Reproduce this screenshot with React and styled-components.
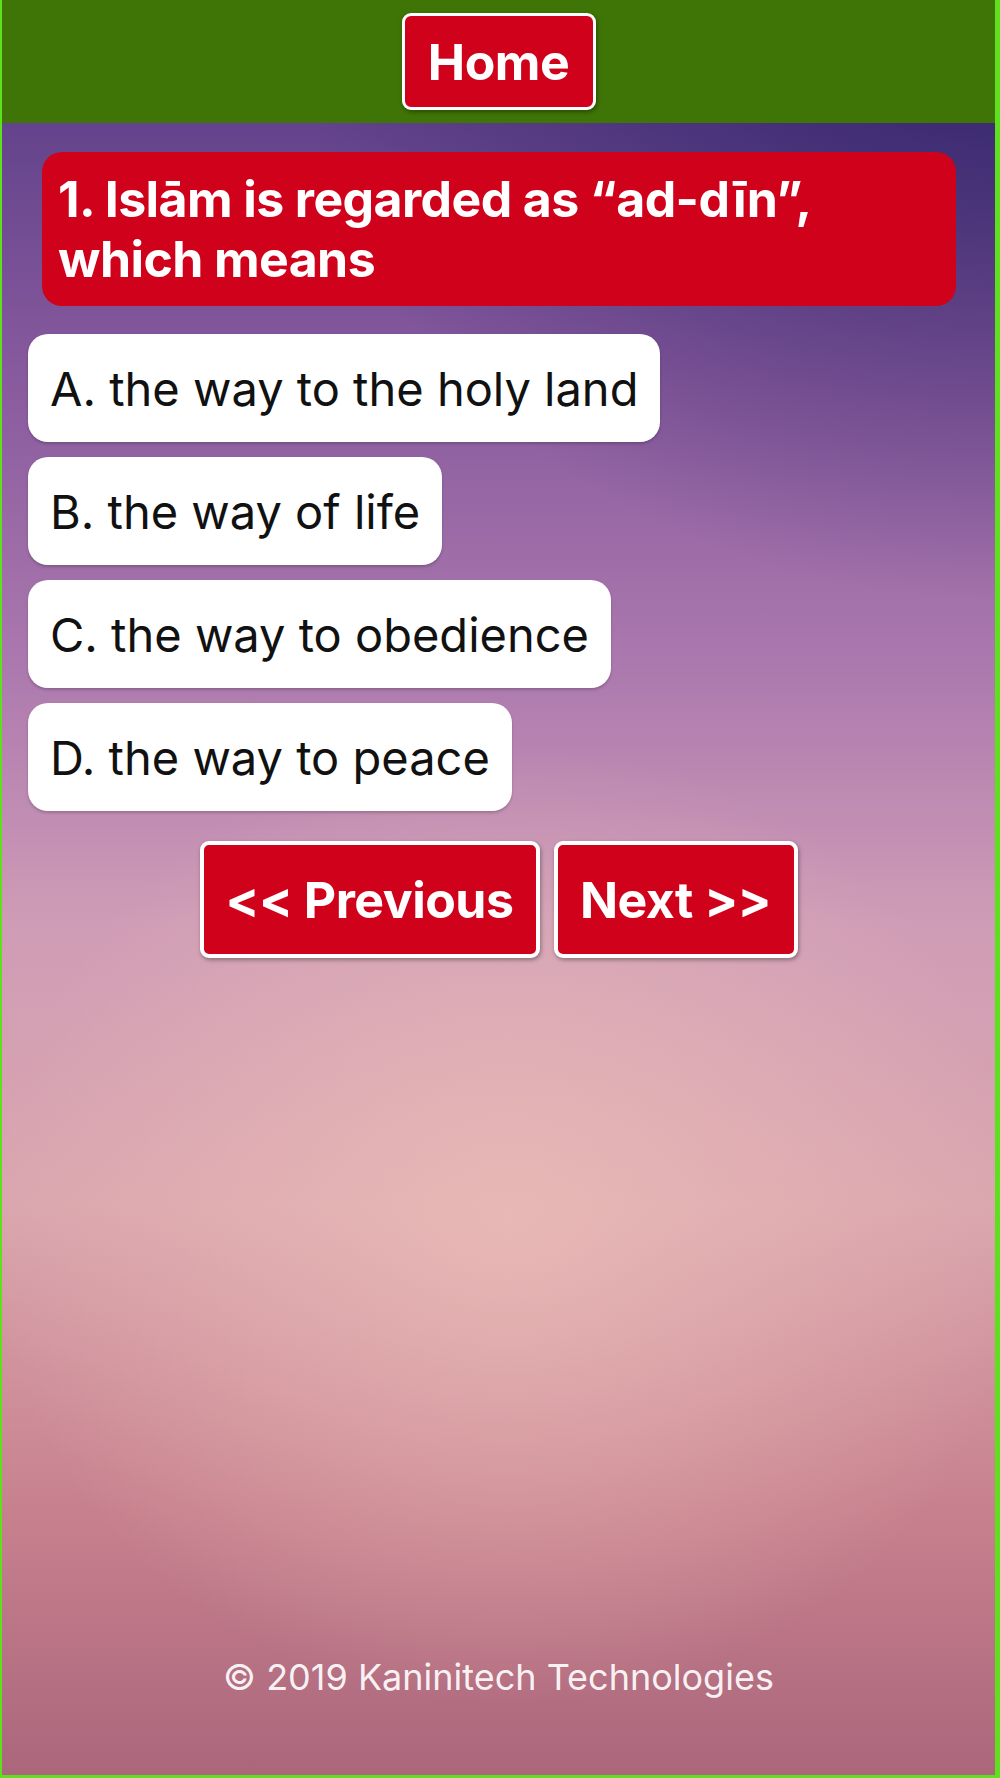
import React from 'react';
import styled, { createGlobalStyle } from 'styled-components';

const GlobalStyle = createGlobalStyle`
  html, body {
    margin: 0;
    padding: 0;
  }
  body {
    font-family: Inter, Roboto, "Liberation Sans", Arial, sans-serif;
  }
`;

const Screen = styled.div`
  box-sizing: border-box;
  width: 1000px;
  height: 1778px;
  display: flex;
  flex-direction: column;
  border-left: 2px solid #5fe01c;
  border-right: 5px solid #5fe01c;
  border-bottom: 3px solid #5fe01c;
  background:
    radial-gradient(ellipse 520px 480px at 51% 69%, rgba(236, 190, 184, 0.75) 0%, rgba(236, 190, 184, 0) 100%),
    radial-gradient(ellipse 700px 600px at 100% 0%, rgba(36, 28, 96, 0.75) 0%, rgba(36, 28, 96, 0) 100%),
    linear-gradient(to bottom, #513883 0%, #85589c 20%, #ad7aaf 38%, #cf9cb6 52%, #daa6ae 68%, #c7818e 85%, #ab667c 100%);
`;

const Header = styled.header`
  height: 123px;
  flex-shrink: 0;
  background: #3f7406;
  display: flex;
  align-items: center;
  justify-content: center;
`;

const RedButton = styled.button`
  font-family: inherit;
  background: #d0021b;
  color: #fff;
  font-weight: 700;
  font-size: ${p => p.size || 50}px;
  border: ${p => p.border || 4}px solid #fff;
  border-radius: 9px;
  box-shadow: 1px 2px 4px rgba(0, 0, 0, 0.35);
  padding: 0;
  width: ${p => p.w}px;
  height: ${p => p.h}px;
  display: flex;
  align-items: center;
  justify-content: center;
  letter-spacing: -0.5px;
`;

const Body = styled.main`
  flex: 1;
  display: flex;
  flex-direction: column;
  padding: 29px 0 0 0;
`;

const Question = styled.div`
  margin: 0 39px 0 40px;
  background: #d0021b;
  color: #fff;
  border-radius: 20px;
  padding: 17px 16px 17px 16px;
  font-size: 50px;
  font-weight: 700;
  line-height: 60px;
  letter-spacing: -0.6px;
`;

const Options = styled.div`
  display: flex;
  flex-direction: column;
  align-items: flex-start;
  gap: 15px;
  margin: 28px 0 0 26px;
`;

const Option = styled.div`
  box-sizing: border-box;
  height: 108px;
  background: #fff;
  color: #111;
  border-radius: 20px;
  padding: 0 22px 0 22px;
  display: flex;
  align-items: center;
  font-size: 47px;
  font-weight: 400;
  letter-spacing: 0;
  box-shadow: 0 2px 3px rgba(0, 0, 0, 0.2);
`;

const Nav = styled.div`
  display: flex;
  justify-content: center;
  gap: 14px;
  margin-top: 30px;
`;

const Footer = styled.footer`
  margin-top: auto;
  padding-bottom: 76px;
  text-align: center;
  color: rgba(255, 255, 255, 0.92);
  font-size: 36px;
  letter-spacing: 0;
`;

const options = [
  'A. the way to the holy land',
  'B. the way of life',
  'C. the way to obedience',
  'D. the way to peace',
];

export default function App() {
  return (
    <>
      <GlobalStyle />
      <Screen>
        <Header>
          <RedButton w={194} h={97} border={3}>Home</RedButton>
        </Header>
        <Body>
          <Question>1. Islām is regarded as “ad-dīn”, which means</Question>
          <Options>
            {options.map(o => (
              <Option key={o}>{o}</Option>
            ))}
          </Options>
          <Nav>
            <RedButton w={340} h={117}>&lt;&lt; Previous</RedButton>
            <RedButton w={244} h={117}>Next &gt;&gt;</RedButton>
          </Nav>
          <Footer>© 2019 Kaninitech Technologies</Footer>
        </Body>
      </Screen>
    </>
  );
}
